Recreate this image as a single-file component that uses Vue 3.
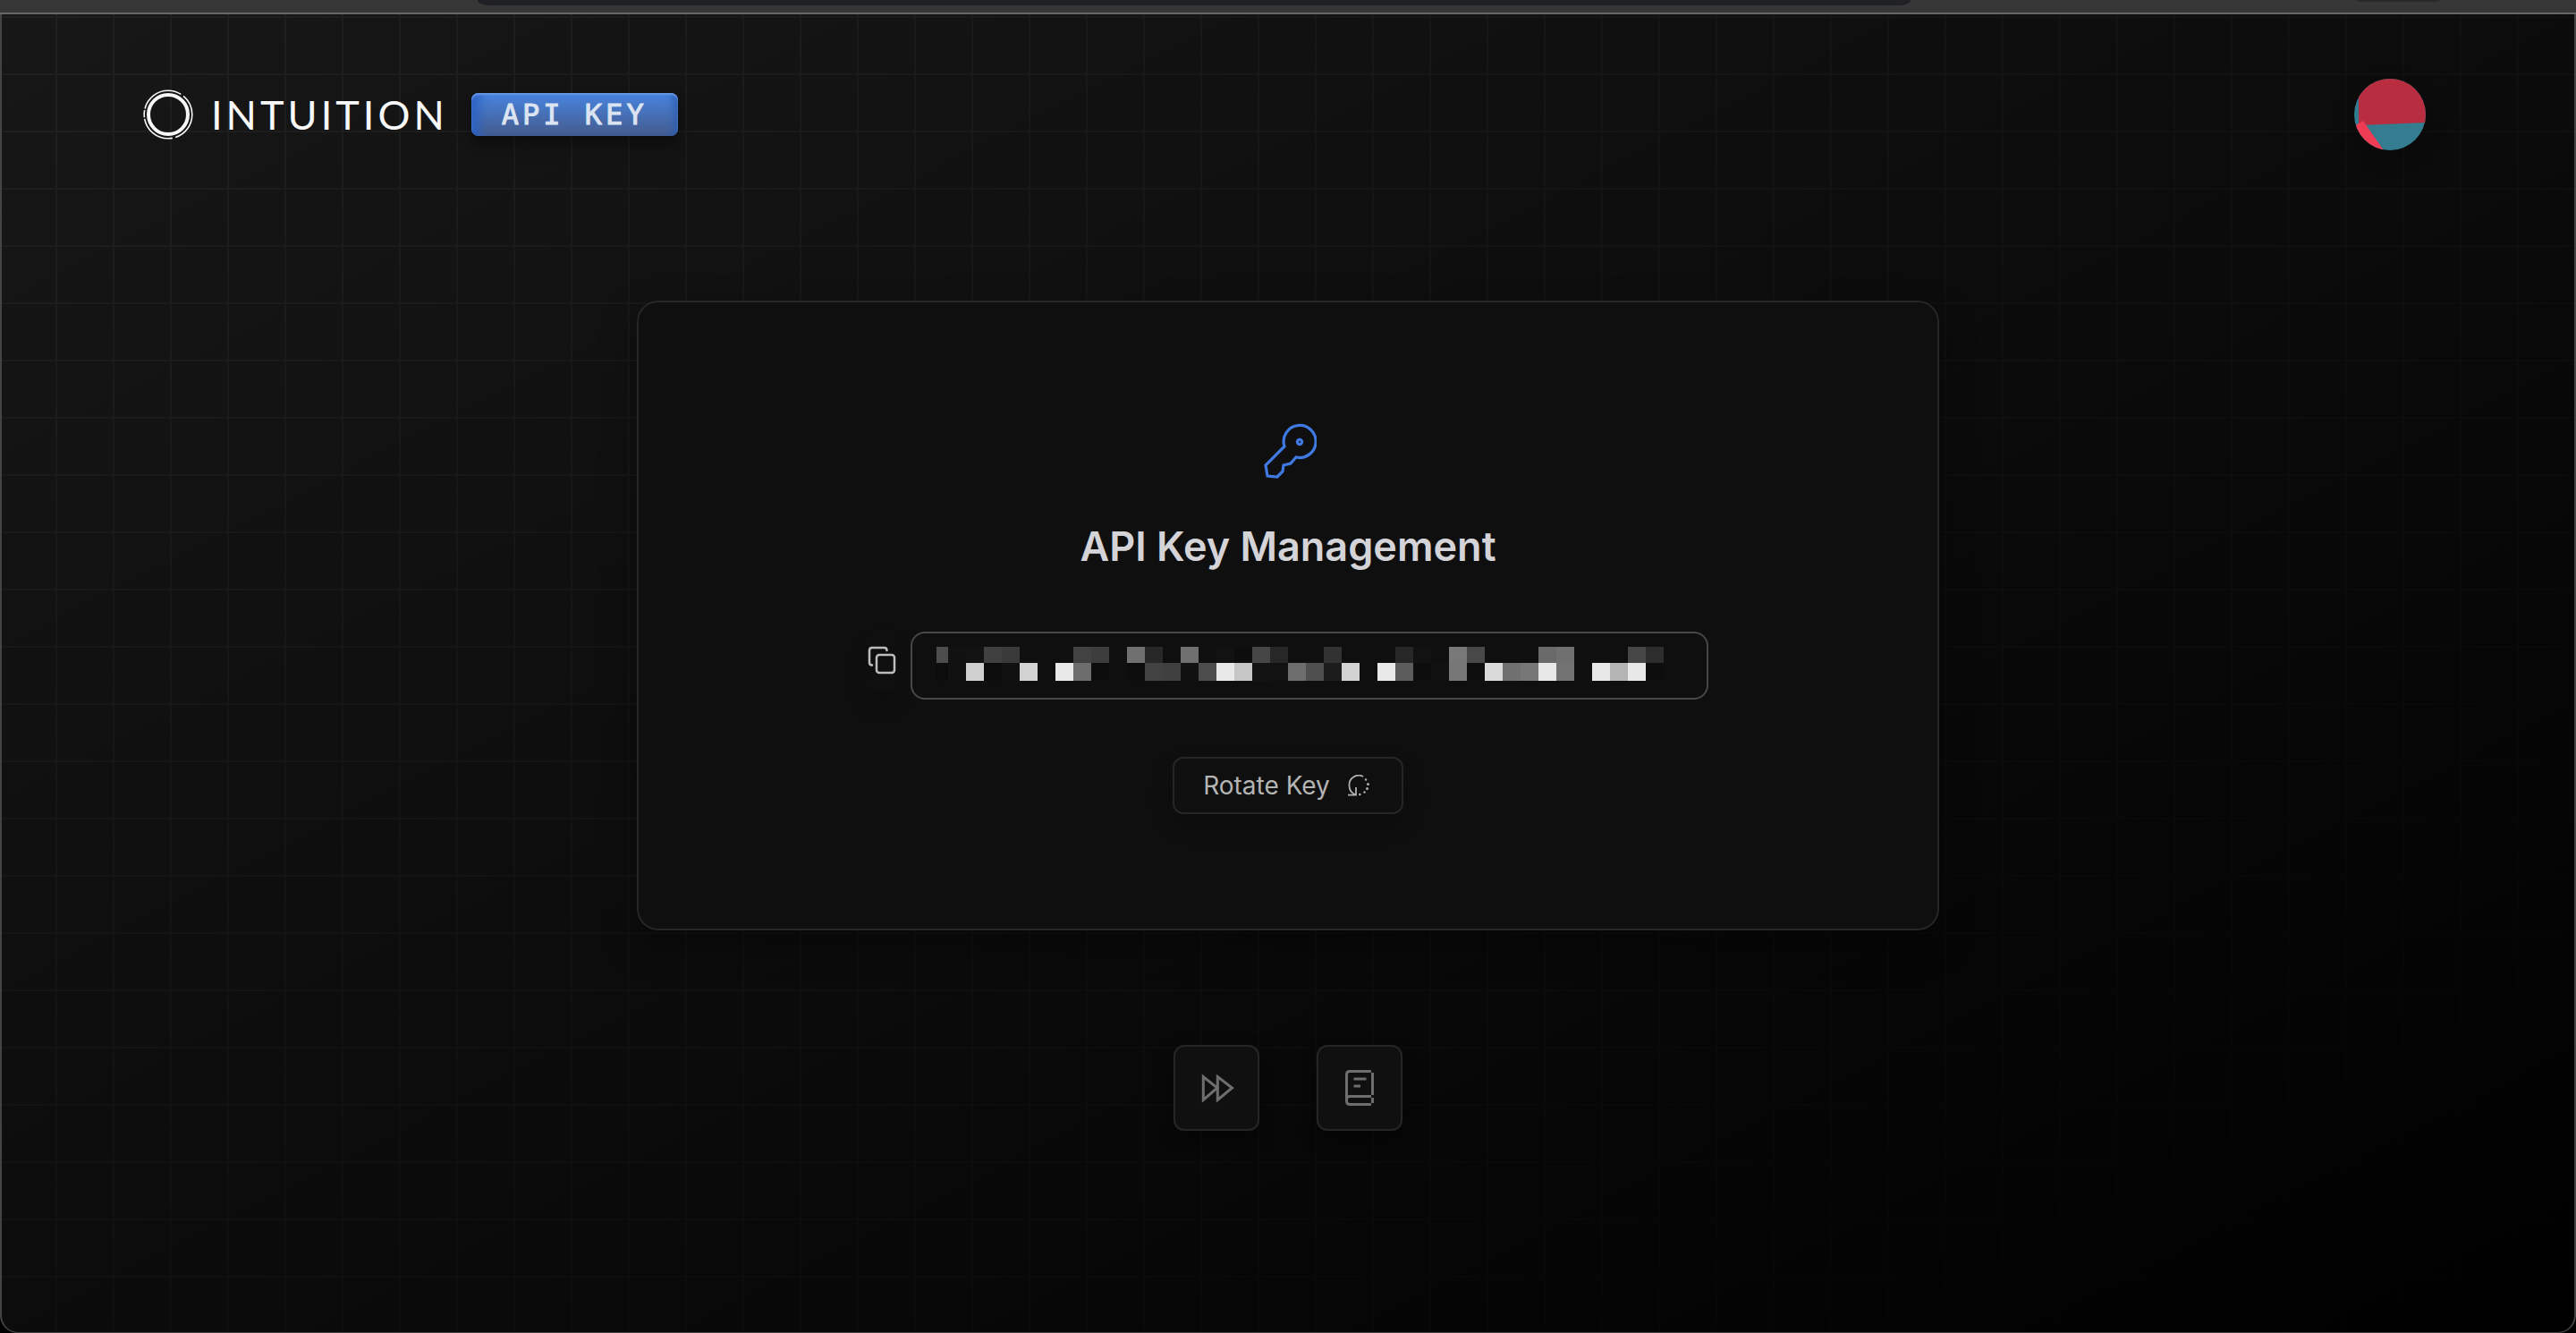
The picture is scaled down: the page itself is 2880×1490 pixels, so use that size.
<script setup>
const blank = 'transparent'
const upper = {
  0: '#4d4d4d', 1: '#111111', 2: '#121212', 3: '#404040', 4: '#3a3a3a', 8: '#424242', 9: '#3d3d3d',
  11: '#707070', 12: '#282828', 14: '#707070', 16: '#121212', 17: '#0d0d0d', 18: '#464646', 19: '#272727',
  22: '#323232', 26: '#272727', 27: '#121212', 29: '#787878', 30: '#484848', 34: '#6a6a6a', 35: '#707070',
  39: '#474747', 40: '#2d2d2d',
}
const lower = {
  0: '#0c0c0c', 1: '#111111', 2: '#cfcfcf', 3: '#0c0c0c', 4: '#111111', 5: '#d2d2d2', 7: '#e9e9e9', 8: '#6d6d6d',
  9: '#0d0d0d', 11: '#0c0c0c', 12: '#424242', 13: '#3f3f3f', 14: '#111111', 15: '#4d4d4d', 16: '#e9e9e9',
  17: '#c6c6c6', 18: '#131313', 19: '#121212', 20: '#6e6e6e', 21: '#4f4f4f', 22: '#1c1c1c', 23: '#d2d2d2',
  25: '#e9e9e9', 26: '#5c5c5c', 27: '#0d0d0d', 28: '#111111', 29: '#777777', 30: '#0e0e0e', 31: '#dadada',
  32: '#707070', 33: '#777777', 34: '#e8e8e8', 35: '#737373', 37: '#e8e8e8', 38: '#b4b4b4', 39: '#e8e8e8',
  40: '#0d0d0d',
}
const cells = [upper, lower].flatMap((row) => Array.from({ length: 41 }, (_, i) => row[i] ?? blank))
</script>

<template>
  <div class="window">
    <div class="chrome"><span class="omnibox"></span><span class="chip"></span></div>
    <div class="page">
      <header class="header">
        <a class="brand" href="#">
          <svg class="mark" viewBox="0 0 56 56" fill="none" stroke="#f8f8f8">
            <circle cx="28" cy="28" r="22" stroke-width="4" />
            <circle cx="28" cy="28" r="26.800" stroke-width="1.600" pathLength="100" stroke-dasharray="20 2 25 1 5 1 30 2 14 0" />
          </svg>
          <span class="word">INTUITION</span>
        </a>
        <span class="badge">API KEY</span>
        <button class="avatar" aria-label="Account">
          <svg viewBox="0 0 80 80">
            <rect width="80" height="80" fill="#347c90" />
            <path d="M5 0H80V49L5 52Z" fill="#b82e40" />
            <path d="M0 53L10 47L33 80H0Z" fill="#ef3c55" />
          </svg>
        </button>
      </header>

      <main class="main">
        <section class="card">
          <svg class="key" viewBox="-2 0 64 64" fill="none" stroke="#3f7ae2" stroke-width="3.200">
            <path d="M26 26L5 47L7 59L18 60L24 54L25 47L33 45L39 38A18 18 0 1 0 26 26Z" />
            <circle cx="43" cy="21" r="2.600" />
          </svg>
          <h1>API Key Management</h1>
          <div class="secret">
            <button class="copy" aria-label="Copy key">
              <svg viewBox="0 0 32 32" fill="none" stroke="#bdbdbd" stroke-width="2.500" stroke-linecap="round">
                <rect x="10" y="10" width="20" height="20" rx="3" />
                <path d="M5 21.500Q2 21.500 2 18.500V5Q2 2 5 2H18.500Q21.500 2 21.500 5" />
              </svg>
            </button>
            <div class="field" role="img" aria-label="Hidden key">
              <i v-for="(c, i) in cells" :key="i" :style="{ background: c }"></i>
            </div>
          </div>
          <button class="rotate">
            Rotate Key
            <svg viewBox="0 0 24 24" fill="none" stroke="#b0b0b0" stroke-width="1.800">
              <path d="M17 2A10.500 10.500 0 0 0 1.500 12C1.500 17 4 20.500 8.500 22.500" />
              <path d="M0 22.700H9V14" />
              <g fill="#b0b0b0" stroke="none">
                <circle cx="20" cy="5.500" r="1.200" /><circle cx="22.500" cy="10.500" r="1.500" />
                <circle cx="21.500" cy="15.500" r="1.500" /><circle cx="18.500" cy="19.500" r="1.200" />
                <circle cx="13.300" cy="22" r="1.300" />
              </g>
            </svg>
          </button>
        </section>

        <nav class="links">
          <button aria-label="Continue">
            <svg viewBox="0 0 40 40" fill="none" stroke="#6e6e6e" stroke-width="3">
              <path d="M5.300 7.500V33.500L21 20Z" /><path d="M21.300 7.500V33.500L37.500 20Z" />
            </svg>
          </button>
          <button aria-label="Documentation">
            <svg viewBox="0 0 40 40" fill="none" stroke="#6e6e6e" stroke-width="3">
              <path d="M33 1.500H9Q5.500 1.500 5.500 5V34.500Q5.500 38.500 9.500 38.500H33" />
              <path d="M5.500 33Q5.500 29.500 9 29.500H33" />
              <path d="M34.500 3V28M34.500 31V37" />
              <path d="M13.500 10H27.500M13.500 18H21" />
            </svg>
          </button>
        </nav>
      </main>
    </div>
  </div>
</template>

<style>
body {
  margin: 0;
  background: #000;
}
</style>

<style scoped>
* {
  box-sizing: border-box;
}
.window {
  min-height: 100vh;
  display: flex;
  flex-direction: column;
  font-family: Inter, "Liberation Sans", sans-serif;
}
button {
  font: inherit;
  padding: 0;
  border: 0;
  background: none;
}
svg {
  display: block;
}
.chrome {
  height: 16px;
  display: flex;
  align-items: flex-start;
  background: #373737;
  border-bottom: 2px solid #676767;
}
.omnibox {
  width: 1602px;
  height: 6px;
  margin-left: 534px;
  margin-right: 498px;
  background: #202124;
  border-radius: 0 0 12px 12px / 0 0 6px 6px;
}
.chip {
  width: 94px;
  height: 2px;
  background: #29292b;
  border-radius: 0 0 8px 8px / 0 0 2px 2px;
}
.page {
  flex: 1;
  border: solid #444;
  border-width: 0 2px 1px;
  border-radius: 0 0 20px 20px;
  background:
    linear-gradient(to bottom right, transparent, #000),
    linear-gradient(to right, #202020 2px, transparent 2px) 60px 0 / 64px 64px,
    linear-gradient(to bottom, #202020 2px, transparent 2px) 0 2px / 64px 64px,
    #171717;
}
.header {
  display: flex;
  align-items: center;
  padding: 72px 166px 0 158px;
}
.brand {
  display: flex;
  align-items: center;
  gap: 20px;
  color: #f8f8f8;
  text-decoration: none;
}
.mark {
  width: 56px;
  height: 56px;
}
.word {
  font-family: Lato, sans-serif;
  font-size: 45px;
  line-height: 56px;
  letter-spacing: 4px;
}
.badge {
  margin-left: 26px;
  height: 48px;
  padding: 0 34px;
  border-radius: 8px;
  background: linear-gradient(#4884e0, #445b8c);
  box-shadow: inset 0 2px 2px #6a9bea, inset 16px 0 12px -8px #2c62c4, inset -10px 0 8px -6px #2c5cb0, 0 8px 16px rgba(0, 0, 0, 0.4);
  color: #dce4f2;
  font-family: "DejaVu Sans Mono", monospace;
  font-size: 32px;
  line-height: 48px;
  letter-spacing: 4px;
  -webkit-text-stroke: 1px #dce4f2;
}
.avatar {
  width: 80px;
  height: 80px;
  margin-left: auto;
  border-radius: 50%;
  overflow: hidden;
  box-shadow: 0 8px 24px rgba(0, 0, 0, 0.3);
}
.main {
  display: flex;
  flex-direction: column;
  align-items: center;
  padding-top: 168px;
}
.card {
  width: 1456px;
  max-width: 100%;
  display: flex;
  flex-direction: column;
  align-items: center;
  padding: 135px 0 128px;
  border: 2px solid #262626;
  border-radius: 24px;
  background: #0f0f0f;
  box-shadow: 0 16px 40px rgba(0, 0, 0, 0.35);
}
.key {
  width: 64px;
  height: 64px;
}
h1 {
  margin: 42px 0 0;
  font-size: 45px;
  font-weight: 600;
  line-height: 64px;
  color: #d4d4d8;
}
.secret {
  display: flex;
  gap: 16px;
  margin-top: 63px;
}
.copy {
  width: 32px;
  height: 64px;
  box-shadow: 0 16px 24px rgba(0, 0, 0, 0.15);
}
.copy svg {
  width: 32px;
  height: 32px;
}
.field {
  width: 892px;
  height: 76px;
  display: grid;
  grid-template-columns: 13px repeat(40, 20px);
  grid-template-rows: 18px 20px;
  padding: 15px 27px;
  border: 2px solid #484848;
  border-radius: 16px;
}
.rotate {
  height: 64px;
  margin-top: 64px;
  display: flex;
  align-items: center;
  gap: 20px;
  padding: 0 36px 0 32px;
  border: 2px solid #262626;
  border-radius: 12px;
  box-shadow: 0 12px 24px rgba(0, 0, 0, 0.25);
  color: #b4b4b4;
  font-size: 28px;
  font-weight: 400;
  line-height: 40px;
}
.rotate svg {
  width: 24px;
  height: 24px;
}
.links {
  display: flex;
  gap: 64px;
  margin-top: 128px;
}
.links button {
  width: 96px;
  height: 96px;
  display: grid;
  place-items: center;
  border: 2px solid #262626;
  border-radius: 12px;
  background: #101010;
  box-shadow: 0 8px 20px rgba(0, 0, 0, 0.4);
}
.links svg {
  width: 40px;
  height: 40px;
}
</style>
